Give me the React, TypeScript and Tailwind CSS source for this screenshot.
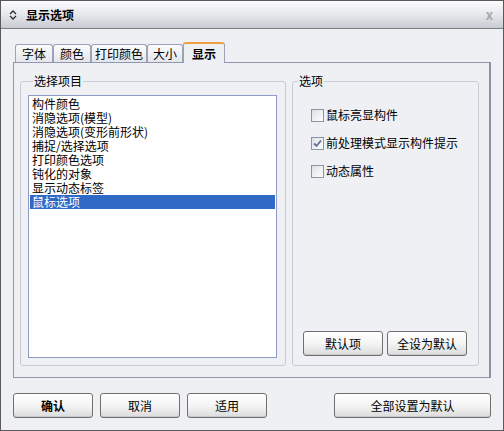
import React from "react";

const items = [
  "构件颜色",
  "消隐选项(模型)",
  "消隐选项(变形前形状)",
  "捕捉/选择选项",
  "打印颜色选项",
  "钝化的对象",
  "显示动态标签",
  "鼠标选项",
];

const tabs = [
  { label: "字体", w: "w-[38px]" },
  { label: "颜色", w: "w-[38px]" },
  { label: "打印颜色", w: "w-[56px]" },
  { label: "大小", w: "w-[36px]" },
];

function Btn({ children, className = "", bold = false }: { children: React.ReactNode; className?: string; bold?: boolean }) {
  return (
    <div
      className={
        "h-[25px] flex items-center justify-center rounded-[3px] border border-[#707070] bg-gradient-to-b from-[#ffffff] via-[#f4f4f4] to-[#dcdcdc] shadow-[inset_0_-1px_0_#c8c8c8] " +
        (bold ? "font-bold " : "") +
        className
      }
    >
      {children}
    </div>
  );
}

function Check({ checked = false }: { checked?: boolean }) {
  return (
    <div className="w-[13px] h-[13px] border border-[#8a93a8] bg-gradient-to-br from-[#dcdfe6] to-[#ffffff] flex items-center justify-center">
      {checked && (
        <svg width="9" height="9" viewBox="0 0 9 9">
          <path d="M1 4.5 L3.5 7 L8 1.5" fill="none" stroke="#5f6f9a" strokeWidth="1.8" />
        </svg>
      )}
    </div>
  );
}

export default function App() {
  return (
    <div className="w-[504px] h-[431px] flex flex-col border border-[#5a5a5a] bg-[#eef0f4] text-[12px] leading-[14px] text-black font-['Noto_Sans_CJK_SC',sans-serif]">
      {/* Title bar */}
      <div className="h-[28px] shrink-0 flex items-center border-b border-[#7c8089] bg-gradient-to-b from-[#fcfcfd] via-[#e6e8ec] to-[#c7cbd3] pl-[7px] pr-[10px]">
        <svg width="10" height="12" viewBox="0 0 10 12" className="mr-[8px]">
          <path d="M2 5 L5 2 L8 5" fill="none" stroke="#303030" strokeWidth="1.3" />
          <path d="M2 7 L5 10 L8 7" fill="none" stroke="#303030" strokeWidth="1.3" />
        </svg>
        <span className="font-bold text-[12px]">显示选项</span>
        <div className="flex-1" />
        <span className="text-[#a6a9b0] text-[13px] font-bold">x</span>
      </div>

      <div className="flex-1 flex flex-col pl-[12px]">
        {/* Tabs */}
        <div className="mt-[13px] h-[20px] flex items-end pl-[2px]">
          {tabs.map((t) => (
            <div
              key={t.label}
              className={
                t.w +
                " h-[18px] flex items-center justify-center border border-b-0 border-[#9ca3b5] rounded-t-[3px] bg-gradient-to-b from-[#fbfbfc] to-[#e4e6eb]"
              }
            >
              {t.label}
            </div>
          ))}
          <div className="w-[42px] h-[21px] -mb-px relative z-10 flex items-center justify-center border border-b-0 border-[#9ca3b5] border-t-2 border-t-[#f0a040] rounded-t-[3px] bg-[#eef0f4] font-bold">
            显示
          </div>
        </div>

        {/* Panel */}
        <div className="w-[478px] h-[316px] border border-[#8f98b0] border-r-2 border-r-[#8a93aa] flex gap-[6px] pl-[6px] pt-[10px]">
          {/* Left group */}
          <fieldset className="w-[266px] h-[293px] border border-[#c9ccd4] rounded-[3px] px-[7px] m-0">
            <legend className="ml-[5px] px-[1px] leading-[16px]">选择项目</legend>
            <div className="mt-[6px] w-[249px] h-[263px] border border-[#8e9bc4] bg-white p-px">
              {items.map((it, i) => (
                <div
                  key={it}
                  className={
                    "h-[14px] pl-[2px] whitespace-nowrap " +
                    (i === 7 ? "bg-[#316ac5] text-white" : "")
                  }
                >
                  {it}
                </div>
              ))}
            </div>
          </fieldset>

          {/* Right group */}
          <fieldset className="w-[187px] h-[293px] border border-[#c9ccd4] rounded-[3px] m-0 flex flex-col">
            <legend className="ml-[5px] px-[1px] leading-[16px]">选项</legend>
            <div className="flex flex-col pl-[18px] pt-[19px] gap-[14px]">
              <div className="flex items-center gap-[2px]">
                <Check />
                <span>鼠标亮显构件</span>
              </div>
              <div className="flex items-center gap-[2px]">
                <Check checked />
                <span>前处理模式显示构件提示</span>
              </div>
              <div className="flex items-center gap-[2px]">
                <Check />
                <span>动态属性</span>
              </div>
            </div>
            <div className="flex-1" />
            <div className="flex gap-[4px] pl-[10px] pb-[9px]">
              <Btn className="w-[80px]">默认项</Btn>
              <Btn className="w-[80px]">全设为默认</Btn>
            </div>
          </fieldset>
        </div>

        {/* Bottom buttons */}
        <div className="mt-[15px] flex">
          <Btn bold className="w-[80px]">确认</Btn>
          <Btn className="w-[80px] ml-[7px]">取消</Btn>
          <Btn className="w-[80px] ml-[7px]">适用</Btn>
          <Btn className="w-[157px] ml-[67px]">全部设置为默认</Btn>
        </div>
      </div>
    </div>
  );
}
